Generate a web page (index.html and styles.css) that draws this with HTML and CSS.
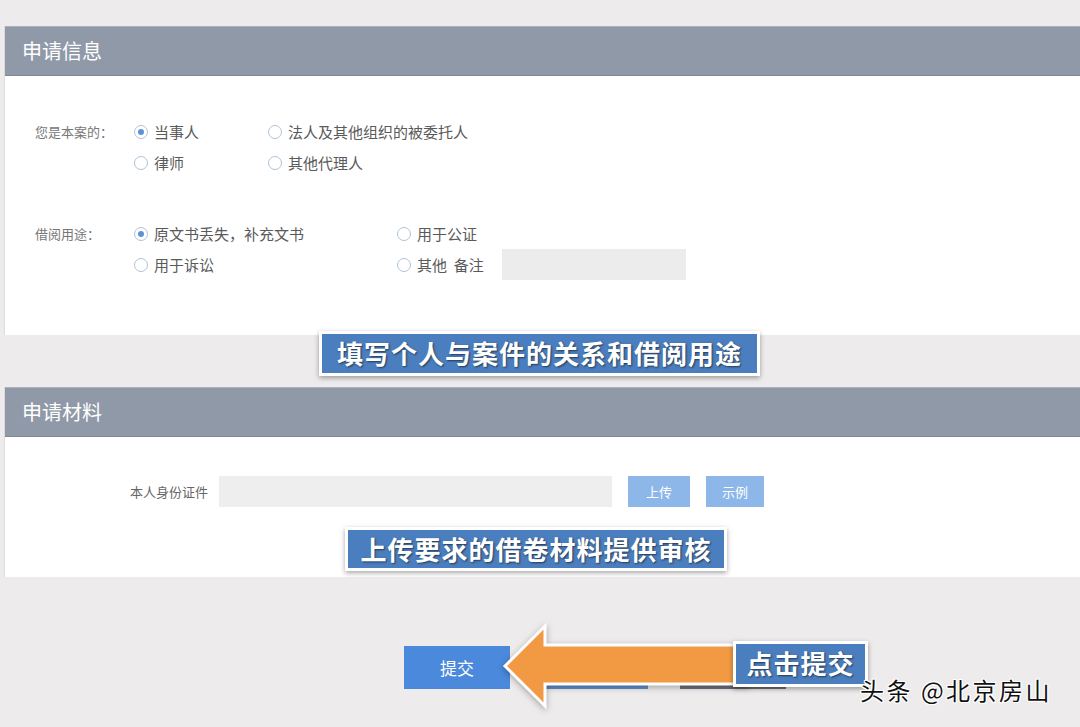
FILE: index.html
```html
<!DOCTYPE html>
<html lang="zh-CN">
<head>
<meta charset="utf-8">
<title>申请信息</title>
<link rel="stylesheet" href="styles.css">
</head>
<body>
<div class="page">
  <section class="panel">
    <div class="panel-head">申请信息</div>
    <div class="panel-body info-body">
      <div class="field">
        <span class="field-label">您是本案的：</span>
        <div class="options opts-role">
          <label class="option"><span class="radio checked"></span>当事人</label>
          <label class="option"><span class="radio"></span>法人及其他组织的被委托人</label>
          <label class="option"><span class="radio"></span>律师</label>
          <label class="option"><span class="radio"></span>其他代理人</label>
        </div>
      </div>
      <div class="field">
        <span class="field-label">借阅用途：</span>
        <div class="options opts-use">
          <label class="option"><span class="radio checked"></span>原文书丢失，补充文书</label>
          <label class="option"><span class="radio"></span>用于公证</label>
          <label class="option"><span class="radio"></span>用于诉讼</label>
          <label class="option"><span class="radio"></span>其他&nbsp;&nbsp;备注<span class="note-input"></span></label>
        </div>
      </div>
    </div>
  </section>

  <section class="panel panel-material">
    <div class="panel-head">申请材料</div>
    <div class="panel-body material-body">
      <span class="mat-label">本人身份证件</span>
      <span class="file-input"></span>
      <button class="btn-light">上传</button>
      <button class="btn-light btn-example">示例</button>
    </div>
  </section>

  <div class="actions">
    <button class="btn-submit">提交</button>
    <button class="btn-hidden btn-blue"></button>
    <button class="btn-hidden btn-gray"></button>
  </div>

  <div class="callout callout-relation">填写个人与案件的关系和借阅用途</div>
  <div class="callout callout-upload">上传要求的借卷材料提供审核</div>

  <svg class="arrow" width="250" height="92" viewBox="0 0 250 92">
    <polygon points="5,46 45,6 45,25 248,25 248,64 45,64 45,86" fill="#f29a43" stroke="#ffffff" stroke-width="3" stroke-linejoin="miter"/>
  </svg>
  <div class="callout callout-click">点击提交</div>

  <div class="watermark">头条 @北京房山</div>
</div>
</body>
</html>
```
FILE: styles.css
```css
html, body {
  margin: 0;
  padding: 0;
  background: #edebeb;
}
body {
  font-family: "Noto Sans CJK SC", "Noto Sans", sans-serif;
  color: #555;
}
.page {
  position: relative;
  width: 1080px;
  height: 727px;
  overflow: hidden;
  padding-top: 26px;
  box-sizing: border-box;
}
.panel {
  margin-left: 4px;
  background: #ffffff;
  border-left: 1px solid #dcdcdc;
}
.panel-material {
  margin-top: 52px;
}
.panel-head {
  height: 50px;
  box-sizing: border-box;
  background: #8f99a8;
  border-top: 1px solid #aab3bb;
  border-bottom: 1px solid #7e8897;
  color: #ffffff;
  font-size: 20px;
  line-height: 48px;
  padding-left: 17px;
}
.info-body {
  height: 259px;
  box-sizing: border-box;
  padding: 40px 0 0 30px;
  display: flex;
  flex-direction: column;
  gap: 40px;
}
.field {
  display: flex;
  align-items: flex-start;
}
.field-label {
  width: 99px;
  flex: none;
  font-size: 13px;
  line-height: 31px;
  color: #777;
}
.options {
  display: grid;
  grid-auto-rows: 31px;
}
.opts-role {
  grid-template-columns: 134px auto;
}
.opts-use {
  grid-template-columns: 263px auto;
}
.option {
  display: flex;
  align-items: center;
  font-size: 15px;
  color: #5a5a5a;
  white-space: nowrap;
}
.radio {
  width: 12px;
  height: 12px;
  border: 1px solid #aec3d8;
  border-radius: 50%;
  background: #fff;
  margin-right: 6px;
  position: relative;
  flex: none;
}
.radio.checked::after {
  content: "";
  position: absolute;
  left: 3px;
  top: 3px;
  width: 6px;
  height: 6px;
  border-radius: 50%;
  background: #5e92d6;
}
.note-input {
  display: inline-block;
  width: 184px;
  height: 31px;
  background: #ececec;
  margin-left: 18px;
}
.material-body {
  height: 140px;
  box-sizing: border-box;
  padding: 39px 0 0 125px;
  display: flex;
  align-items: flex-start;
}
.mat-label {
  font-size: 13px;
  line-height: 31px;
  color: #666;
  margin-right: 11px;
}
.file-input {
  width: 393px;
  height: 31px;
  background: #eeeeee;
  margin-right: 16px;
}
.btn-light {
  width: 62px;
  height: 31px;
  border: none;
  background: #8db6e9;
  color: #ffffff;
  font-family: inherit;
  font-size: 13px;
  padding: 0;
}
.btn-example {
  width: 58px;
  margin-left: 16px;
}
.actions {
  margin-top: 69px;
  padding-left: 404px;
  display: flex;
  gap: 32px;
}
.actions button {
  width: 106px;
  height: 43px;
  border: none;
  font-family: inherit;
  font-size: 17px;
  color: #ffffff;
  padding: 0;
}
.btn-submit {
  background: #4a89db;
}
.btn-blue {
  background: #5f8fcd;
}
.btn-gray {
  background: #6f6f7c;
  width: 104px;
}
.callout {
  position: absolute;
  box-sizing: border-box;
  background: #4b7ebe;
  border: 3px solid #ffffff;
  box-shadow: 0 2px 5px rgba(0, 0, 0, 0.35);
  color: #ffffff;
  font-weight: 700;
  font-size: 26px;
  letter-spacing: 1px;
  text-align: center;
  text-shadow: 1px 1px 2px rgba(0, 0, 0, 0.55);
  line-height: 38px;
  white-space: nowrap;
}
.callout-relation {
  left: 319px;
  top: 331px;
  width: 441px;
  height: 45px;
}
.callout-upload {
  left: 345px;
  top: 527px;
  width: 382px;
  height: 44px;
}
.callout-click {
  left: 733px;
  top: 641px;
  width: 135px;
  height: 46px;
}
.arrow {
  position: absolute;
  left: 500px;
  top: 620px;
  filter: drop-shadow(0 2px 3px rgba(0, 0, 0, 0.3));
}
.watermark {
  position: absolute;
  left: 860px;
  top: 672px;
  font-size: 24px;
  color: #111;
  letter-spacing: 2.5px;
  text-shadow: -1px 0 #fff, 1px 0 #fff, 0 -1px #fff, 0 1px #fff, 1px 1px #fff, -1px -1px #fff, 1px -1px #fff, -1px 1px #fff;
  white-space: nowrap;
}
```
